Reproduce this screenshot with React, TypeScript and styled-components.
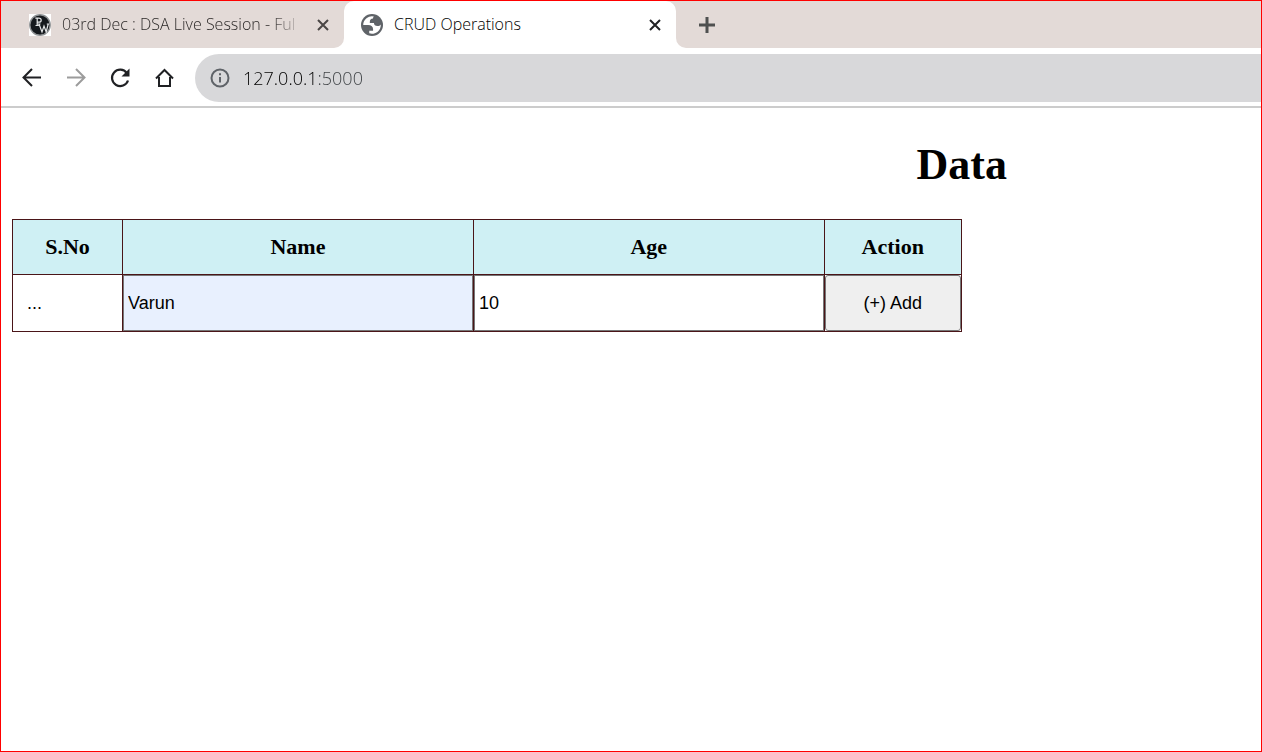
import React from "react";
import styled, { createGlobalStyle } from "styled-components";

const uiFont = `"Open Sans", "Noto Sans", sans-serif`;

const GlobalStyle = createGlobalStyle`
  * { box-sizing: border-box; }
  body { margin: 0; background: #fff; }
`;

const Frame = styled.div`
  min-height: 100vh;
  border: 1px solid #f00;
  overflow: hidden;
  background: #fff;
`;

const TabStrip = styled.div`
  display: flex;
  height: 47px;
  background: #fff;
`;

const TabBack = styled.div`
  display: flex;
  flex: none;
  background: linear-gradient(#e3dad7 0 50%, #fff 50%);
`;

const Tab = styled.div<{ $active?: boolean }>`
  display: flex;
  align-items: center;
  width: ${(p) => (p.$active ? 332 : 343)}px;
  padding: 0 13px 0 ${(p) => (p.$active ? 17 : 28)}px;
  gap: 11px;
  background: ${(p) => (p.$active ? "#fff" : "#e3dad7")};
  border-radius: ${(p) => (p.$active ? "10px 10px 0 0" : "0 0 10px 0")};
`;

const TabTitle = styled.span<{ $muted?: boolean }>`
  flex: 1;
  padding-bottom: 2px;
  white-space: nowrap;
  font: 300 16px/22px ${uiFont};
  color: ${(p) => (p.$muted ? "#2c2928" : "#000")};
  ${(p) => p.$muted && "mask-image: linear-gradient(to right, #000 86%, transparent);"}
`;

const IconButton = styled.button`
  display: grid;
  place-items: center;
  flex: none;
  padding: 0;
  border: 0;
  background: none;
  color: #202124;
  &:disabled { color: #9c9c9c; }
`;

const NewTabArea = styled.div`
  display: flex;
  align-items: center;
  flex: 1;
  padding-left: 21px;
  background: #e3dad7;
  border-bottom-left-radius: 10px;
`;

const Toolbar = styled.div`
  display: flex;
  align-items: center;
  height: 60px;
  padding: 6px 0 4px 18px;
  gap: 18px;
  border-bottom: 2px solid #ccc;
`;

const AddressBar = styled.label`
  display: flex;
  align-items: center;
  flex: 1;
  height: 48px;
  padding-left: 14px;
  gap: 12px;
  border-radius: 24px 0 0 24px;
  background: #d8d8da;
`;

/* The host is drawn darker than the port. */
const AddressInput = styled.input`
  flex: 1;
  min-width: 0;
  padding: 0;
  border: 0;
  outline: 0;
  font: 300 18px/24px ${uiFont};
  color: transparent;
  background: linear-gradient(to right, #000 75px, #3c4043 75px);
  background-clip: text;
  -webkit-background-clip: text;
`;

const Page = styled.main`
  width: 152.5%;
  padding: 31px 11px;
  font-family: "Liberation Serif", serif;
  color: #000;
`;

const Heading = styled.h1`
  margin: 0 0 28px;
  text-align: center;
  font-size: 44px;
  line-height: 52px;
`;

const DataTable = styled.table`
  width: 50%;
  table-layout: fixed;
  border-collapse: collapse;
`;

const HeadCell = styled.th<{ $width?: string }>`
  width: ${(p) => p.$width ?? "auto"};
  height: 55px;
  padding: 0;
  border: 1px solid #4a1518;
  background: #cff0f4;
  font-size: 22px;
  line-height: 26px;
`;

const Cell = styled.td<{ $padded?: boolean }>`
  height: 57px;
  padding: 0 0 0 ${(p) => (p.$padded ? 14 : 0)}px;
  border: 1px solid #4a1518;
  font: 18px/24px "Liberation Sans", sans-serif;
`;

const Field = styled.input<{ $filled?: boolean }>`
  display: block;
  width: 100%;
  height: 56px;
  padding: 0 4px;
  border: 1px solid #767676;
  border-radius: 0;
  outline: 0;
  background: ${(p) => (p.$filled ? "#e8f0fe" : "#fff")};
  color: #000;
  font: 18px/24px "Liberation Sans", sans-serif;
`;

const AddButton = styled.button`
  display: block;
  width: 100%;
  height: 56px;
  padding: 0;
  border: 1px solid #767676;
  border-radius: 3px;
  background: #efefef;
  color: #000;
  font: 18px/24px "Liberation Sans", sans-serif;
`;

const Stroke = ({ d, size = 26, color = "currentColor", width = 2 }: { d: string; size?: number; color?: string; width?: number }) => (
  <svg width={size} height={size} viewBox={`0 0 ${size} ${size}`} fill="none" stroke={color} strokeWidth={width} aria-hidden>
    <path d={d} />
  </svg>
);

const CloseIcon = ({ color }: { color: string }) => (
  <Stroke size={16} color={color} width={2} d="M3 3l10 10M13 3L3 13" />
);

const CourseLogo = () => (
  <svg width="22" height="22" viewBox="0 0 22 22" aria-hidden>
    <rect width="22" height="22" fill="#fff" />
    <circle cx="11" cy="11" r="10.2" fill="#15191d" stroke="#8f9294" strokeWidth="1.4" />
    <g fill="none" stroke="#e4e6e7" strokeWidth="1.2">
      <path d="M8.200 4v7.500M6.500 11.500h3.400M6.300 4.200h3.400q2.500 0 2.500 2t-2.500 2H8.200" />
      <path d="M8.500 10h3M10 10l3 8 2-6 2.200 6 2-8M17.800 10h2.400" />
    </g>
  </svg>
);

const GlobeIcon = () => (
  <svg width="22" height="22" viewBox="2 2 20 20" aria-hidden>
    <circle cx="12" cy="12" r="10" fill="#5f6368" />
    <path fill="#fff" d="M4 12h4.400c3.407.022 4.922 1.730 4.543 5.127H9.488v2.470a8.004 8.004 0 0 0 10.498-8.083C19.327 12.504 18.332 13 17 13c-2.137 0-3.206-.916-3.206-2.750h-3.748c-.274-2.728.683-4.092 2.870-4.092 0-.975.327-1.597.811-1.970A8.004 8.004 0 0 0 4 12z" />
  </svg>
);

const ReloadIcon = () => (
  <svg width="26" height="26" viewBox="0 0 26 26" aria-hidden>
    <path d="M19.800 8A8.200 8.200 0 1 0 21 15.500" fill="none" stroke="currentColor" strokeWidth="2.200" />
    <path d="M22.500 3.500v8h-8z" fill="currentColor" />
  </svg>
);

const InfoIcon = () => (
  <svg width="22" height="22" viewBox="0 0 22 22" fill="none" stroke="#5f6368" strokeWidth="2" aria-hidden>
    <circle cx="11" cy="11" r="8.500" />
    <path d="M11 10v5.500M11 6.300v2" />
  </svg>
);

export default function App() {
  return (
    <Frame>
      <GlobalStyle />
      <TabStrip>
        <TabBack>
          <Tab>
            <CourseLogo />
            <TabTitle $muted>03rd Dec : DSA Live Session - Ful</TabTitle>
            <IconButton aria-label="Close tab"><CloseIcon color="#4a4645" /></IconButton>
          </Tab>
        </TabBack>
        <TabBack>
          <Tab $active>
            <GlobeIcon />
            <TabTitle>CRUD Operations</TabTitle>
            <IconButton aria-label="Close tab"><CloseIcon color="#202124" /></IconButton>
          </Tab>
        </TabBack>
        <NewTabArea>
          <IconButton aria-label="New tab"><Stroke size={20} color="#4f5050" width={3} d="M2 10h16M10 2v16" /></IconButton>
        </NewTabArea>
      </TabStrip>
      <Toolbar>
        <IconButton aria-label="Back"><Stroke d="M22 12.500H5M13 4l-8.500 8.500L13 21" /></IconButton>
        <IconButton aria-label="Forward" disabled><Stroke d="M4 12.500h17M13 4l8.500 8.500L13 21" /></IconButton>
        <IconButton aria-label="Reload"><ReloadIcon /></IconButton>
        <IconButton aria-label="Home"><Stroke d="M5 13.500L13.500 5l8.500 8.500M8 12v9h11v-9" /></IconButton>
        <AddressBar>
          <InfoIcon />
          <AddressInput aria-label="Address" defaultValue="127.0.0.1:5000" />
        </AddressBar>
      </Toolbar>
      <Page>
        <Heading>Data</Heading>
        <DataTable>
          <thead>
            <tr>
              <HeadCell $width="110px">S.No</HeadCell>
              <HeadCell>Name</HeadCell>
              <HeadCell>Age</HeadCell>
              <HeadCell $width="137px">Action</HeadCell>
            </tr>
          </thead>
          <tbody>
            <tr>
              <Cell $padded>...</Cell>
              <Cell><Field $filled aria-label="Name" defaultValue="Varun" /></Cell>
              <Cell><Field aria-label="Age" defaultValue="10" /></Cell>
              <Cell><AddButton>(+) Add</AddButton></Cell>
            </tr>
          </tbody>
        </DataTable>
      </Page>
    </Frame>
  );
}
